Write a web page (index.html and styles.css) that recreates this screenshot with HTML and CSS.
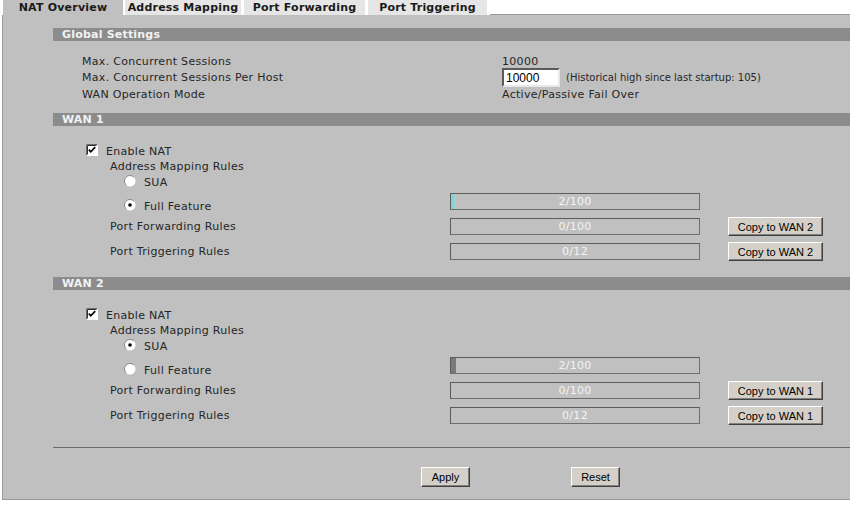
FILE: index.html
```html
<!DOCTYPE html>
<html lang="en">
<head>
    <meta charset="UTF-8">
    <meta name="viewport" content="width=device-width, initial-scale=1.0">
    <title>NAT Overview</title>
    <link rel="stylesheet" href="styles.css">
</head>
<body>
    <div class="tabs">
        <div class="tab active" style="width: 120px">NAT Overview</div>
        <div class="tab" style="width: 116px">Address Mapping</div>
        <div class="tab" style="width: 121px">Port Forwarding</div>
        <div class="tab" style="width: 119px">Port Triggering</div>
        <div class="tab-fill"></div>
    </div>

    <div class="panel">
        <div class="section-head">Global Settings</div>
        <div class="global">
            <div class="g-row">
                <span class="g-label">Max. Concurrent Sessions</span>
                <span>10000</span>
            </div>
            <div class="g-row tall">
                <span class="g-label">Max. Concurrent Sessions Per Host</span>
                <input type="text" class="field" value="10000">
                <span class="hint">(Historical high since last startup: 105)</span>
            </div>
            <div class="g-row">
                <span class="g-label">WAN Operation Mode</span>
                <span>Active/Passive Fail Over</span>
            </div>
        </div>

        <!-- WAN 1 -->
        <div class="section-head">WAN 1</div>
        <div class="wan">
            <div class="row enable">
                <svg class="check" width="12" height="12" viewBox="0 0 12 12">
                    <rect x="0" y="0" width="12" height="12" fill="#fff"/>
                    <path d="M0.5 11.5V0.5H11.5" fill="none" stroke="#6a6a6a"/>
                    <path d="M1.5 10.5V1.5H10.5" fill="none" stroke="#303030"/>
                    <path d="M2.8 5.6L4.8 7.8L9.2 3.2" fill="none" stroke="#000" stroke-width="1.7"/>
                </svg>
                <span>Enable NAT</span>
            </div>
            <div class="row sub-title">Address Mapping Rules</div>
            <div class="row radio-row">
                <svg class="radio" width="12" height="12" viewBox="0 0 12 12">
                    <circle cx="6" cy="6" r="5.5" fill="#fff"/>
                    <path d="M2.1 9.9A5.5 5.5 0 0 1 9.9 2.1" fill="none" stroke="#8a8a8a"/>
                </svg>
                <span>SUA</span>
            </div>
            <div class="row radio-row full">
                <div class="radio-label">
                    <svg class="radio" width="12" height="12" viewBox="0 0 12 12">
                        <circle cx="6" cy="6" r="5.5" fill="#fff"/>
                        <path d="M2.1 9.9A5.5 5.5 0 0 1 9.9 2.1" fill="none" stroke="#8a8a8a"/>
                        <circle cx="6" cy="6" r="1.8" fill="#000"/>
                    </svg>
                    <span>Full Feature</span>
                </div>
                <div class="bar">
                    <div class="bar-fill cyan" style="width: 2%"></div>
                    <div class="bar-text">2/100</div>
                </div>
            </div>
            <div class="row rule">
                <span class="rule-label">Port Forwarding Rules</span>
                <div class="bar"><div class="bar-text">0/100</div></div>
                <button class="btn copy">Copy to WAN 2</button>
            </div>
            <div class="row rule">
                <span class="rule-label">Port Triggering Rules</span>
                <div class="bar"><div class="bar-text">0/12</div></div>
                <button class="btn copy">Copy to WAN 2</button>
            </div>
        </div>

        <!-- WAN 2 -->
        <div class="section-head">WAN 2</div>
        <div class="wan">
            <div class="row enable">
                <svg class="check" width="12" height="12" viewBox="0 0 12 12">
                    <rect x="0" y="0" width="12" height="12" fill="#fff"/>
                    <path d="M0.5 11.5V0.5H11.5" fill="none" stroke="#6a6a6a"/>
                    <path d="M1.5 10.5V1.5H10.5" fill="none" stroke="#303030"/>
                    <path d="M2.8 5.6L4.8 7.8L9.2 3.2" fill="none" stroke="#000" stroke-width="1.7"/>
                </svg>
                <span>Enable NAT</span>
            </div>
            <div class="row sub-title">Address Mapping Rules</div>
            <div class="row radio-row">
                <svg class="radio" width="12" height="12" viewBox="0 0 12 12">
                    <circle cx="6" cy="6" r="5.5" fill="#fff"/>
                    <path d="M2.1 9.9A5.5 5.5 0 0 1 9.9 2.1" fill="none" stroke="#8a8a8a"/>
                    <circle cx="6" cy="6" r="1.8" fill="#000"/>
                </svg>
                <span>SUA</span>
            </div>
            <div class="row radio-row full">
                <div class="radio-label">
                    <svg class="radio" width="12" height="12" viewBox="0 0 12 12">
                        <circle cx="6" cy="6" r="5.5" fill="#fff"/>
                        <path d="M2.1 9.9A5.5 5.5 0 0 1 9.9 2.1" fill="none" stroke="#8a8a8a"/>
                    </svg>
                    <span>Full Feature</span>
                </div>
                <div class="bar">
                    <div class="bar-fill grey" style="width: 2%"></div>
                    <div class="bar-text">2/100</div>
                </div>
            </div>
            <div class="row rule">
                <span class="rule-label">Port Forwarding Rules</span>
                <div class="bar"><div class="bar-text">0/100</div></div>
                <button class="btn copy">Copy to WAN 1</button>
            </div>
            <div class="row rule">
                <span class="rule-label">Port Triggering Rules</span>
                <div class="bar"><div class="bar-text">0/12</div></div>
                <button class="btn copy">Copy to WAN 1</button>
            </div>
        </div>

        <div class="divider"></div>
        <div class="actions">
            <button class="btn action">Apply</button>
            <button class="btn action">Reset</button>
        </div>
    </div>
</body>
</html>
```

FILE: styles.css
```css
body {
    margin: 0;
    background: #fff;
    font-family: 'DejaVu Sans', Verdana, sans-serif;
    font-size: 11px;
    letter-spacing: 0.3px;
    color: #262626;
    overflow: hidden;
}

/* Tab strip */
.tabs {
    display: flex;
    height: 15px;
    padding-left: 3px;
}

.tab {
    height: 15px;
    line-height: 15px;
    margin-right: 3px;
    background: #e6e6e6;
    color: #1a1a1a;
    font-weight: bold;
    letter-spacing: 0.2px;
    text-align: center;
}

.tab.active {
    background: #c0c0c0;
    margin-right: 2px;
}

.tab-fill {
    flex: 1;
    height: 14px;
    border-bottom: 1px solid #9a9a9a;
}

/* Main panel */
.panel {
    margin-left: 2px;
    border-left: 1px solid #9a9a9a;
    border-bottom: 1px solid #9a9a9a;
    background: #c0c0c0;
    padding: 13px 0 12px 50px;
}

.section-head {
    height: 13px;
    line-height: 13px;
    padding-left: 9px;
    background: #8c8c8c;
    color: #f2f2f2;
    font-weight: bold;
    letter-spacing: 0.2px;
}

.global {
    padding: 12px 0 11px 29px;
}

.g-row {
    display: flex;
    align-items: center;
    height: 16px;
}

.g-row.tall {
    height: 17px;
}

.g-label {
    width: 420px;
}

.field {
    box-sizing: border-box;
    width: 58px;
    height: 19px;
    margin: 0;
    padding: 0 2px;
    border: 2px solid;
    border-color: #5a5a5a #e8e8e8 #e8e8e8 #5a5a5a;
    background: #fff;
    font-family: 'Liberation Sans', Arial, sans-serif;
    font-size: 12px;
    color: #000;
}

.hint {
    margin-left: 6px;
    font-size: 10px;
    letter-spacing: 0;
}

/* WAN blocks */
.wan {
    padding: 17px 0 13px 0;
}

.row {
    display: flex;
    align-items: center;
}

.enable {
    height: 17px;
    padding-left: 33px;
}

.check {
    margin-right: 8px;
    margin-top: -4px;
}

.sub-title {
    height: 13px;
    padding-left: 57px;
}

.radio-row {
    height: 19px;
    padding-left: 71px;
}

.radio {
    margin-right: 8px;
    margin-top: -3px;
}

.radio-row.full {
    height: 22px;
    align-items: flex-start;
}

.radio-label {
    display: flex;
    align-items: center;
    width: 326px;
    height: 16px;
    margin-top: 6px;
}

.radio-row.full .bar {
    margin-top: 1px;
}

.rule {
    height: 25px;
    padding-left: 57px;
}

.rule-label {
    width: 340px;
}

.bar {
    position: relative;
    box-sizing: border-box;
    width: 250px;
    height: 17px;
    border: 1px solid #5c5c5c;
    border-right-color: #6e6e6e;
    border-bottom-color: #6e6e6e;
    overflow: hidden;
}

.bar-fill {
    position: absolute;
    left: 0;
    top: 0;
    bottom: 0;
}

.bar-fill.cyan {
    background: linear-gradient(to right, #74d6d6, #a9cfcf);
}

.bar-fill.grey {
    background: #7a7a7a;
}

.bar-text {
    position: relative;
    line-height: 15px;
    text-align: center;
    color: #f4f4f4;
}

/* Buttons */
.btn {
    box-sizing: border-box;
    margin: 0;
    padding: 0;
    background: #d4d0c8;
    border: 1px solid;
    border-color: #fff #404040 #404040 #fff;
    box-shadow: inset -1px -1px 0 #808080;
    font-family: 'Liberation Sans', Arial, sans-serif;
    font-size: 11px;
    letter-spacing: 0;
    color: #000;
}

.copy {
    width: 95px;
    height: 19px;
    margin-left: 28px;
}

.divider {
    margin-top: 6px;
    border-top: 1px solid #6a6a6a;
}

.actions {
    display: flex;
    gap: 101px;
    padding: 19px 0 0 368px;
}

.action {
    width: 49px;
    height: 20px;
}
```
